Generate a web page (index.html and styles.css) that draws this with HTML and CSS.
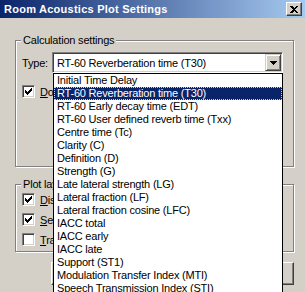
FILE: index.html
```html
<!DOCTYPE html>
<html lang="en">
<head>
    <meta charset="UTF-8">
    <title>Room Acoustics Plot Settings</title>
    <link rel="stylesheet" href="styles.css">
</head>
<body>
    <div class="titlebar">
        <span class="title">Room Acoustics Plot Settings</span>
        <span class="close-btn">
            <svg width="8" height="7" viewBox="0 0 8 7" shape-rendering="crispEdges">
                <path d="M0 0H2L4 2L6 0H8L5 3.5L8 7H6L4 5L2 7H0L3 3.5Z" fill="#000"/>
            </svg>
        </span>
    </div>

    <div class="client">
        <div class="group group-calc">
            <span class="legend">Calculation settings</span>
            <div class="type-row">
                <span class="type-label">Type:</span>
                <div class="combo">
                    <span class="combo-text">RT-60 Reverberation time (T30)</span>
                    <span class="combo-btn">
                        <svg width="7" height="4" viewBox="0 0 7 4" shape-rendering="crispEdges">
                            <path d="M0 0H7V1H6V2H5V3H4V4H3V3H2V2H1V1H0Z" fill="#000"/>
                        </svg>
                    </span>
                    <ul class="dropdown">
                        <li>Initial Time Delay</li>
                        <li class="selected">RT-60 Reverberation time (T30)</li>
                        <li>RT-60 Early decay time (EDT)</li>
                        <li>RT-60 User defined reverb time (Txx)</li>
                        <li>Centre time (Tc)</li>
                        <li>Clarity (C)</li>
                        <li>Definition (D)</li>
                        <li>Strength (G)</li>
                        <li>Late lateral strength (LG)</li>
                        <li>Lateral fraction (LF)</li>
                        <li>Lateral fraction cosine (LFC)</li>
                        <li>IACC total</li>
                        <li>IACC early</li>
                        <li>IACC late</li>
                        <li>Support (ST1)</li>
                        <li>Modulation Transfer Index (MTI)</li>
                        <li>Speech Transmission Index (STI)</li>
                    </ul>
                </div>
            </div>
            <div class="check-row first-check">
                <span class="checkbox checked">
                    <svg width="7" height="7" viewBox="0 0 7 7" shape-rendering="crispEdges"><path d="M0 2H1V3H2V4H3V3H4V2H5V1H6V0H7V3H6V4H5V5H4V6H3V7H2V6H1V5H0Z" fill="#000"/></svg>
                </span>
                <span><u>D</u>o</span>
            </div>
        </div>

        <div class="group group-plot">
            <span class="legend">Plot layout</span>
            <div class="check-list">
                <div class="check-row">
                    <span class="checkbox checked">
                        <svg width="7" height="7" viewBox="0 0 7 7" shape-rendering="crispEdges"><path d="M0 2H1V3H2V4H3V3H4V2H5V1H6V0H7V3H6V4H5V5H4V6H3V7H2V6H1V5H0Z" fill="#000"/></svg>
                    </span>
                    <span><u>D</u>is</span>
                </div>
                <div class="check-row">
                    <span class="checkbox checked">
                        <svg width="7" height="7" viewBox="0 0 7 7" shape-rendering="crispEdges"><path d="M0 2H1V3H2V4H3V3H4V2H5V1H6V0H7V3H6V4H5V5H4V6H3V7H2V6H1V5H0Z" fill="#000"/></svg>
                    </span>
                    <span><u>S</u>e</span>
                </div>
                <div class="check-row">
                    <span class="checkbox"></span>
                    <span><u>T</u>ra</span>
                </div>
            </div>
        </div>

        <div class="buttons">
            <button></button>
            <button></button>
            <button></button>
        </div>
    </div>
</body>
</html>
```

FILE: styles.css
```css
* {
    box-sizing: border-box;
}
html, body {
    margin: 0;
    padding: 0;
}
body {
    width: 305px;
    height: 292px;
    overflow: hidden;
    background-color: #d4d0c8;
    color: #000;
    font-family: "Liberation Sans", Arial, sans-serif;
    font-size: 11px;
    letter-spacing: -0.2px;
}
.titlebar {
    height: 18px;
    display: flex;
    align-items: center;
    justify-content: space-between;
    padding: 0 3px 0 4px;
    background: linear-gradient(to right, #0a246a, #a6caf0);
}
.title {
    color: #fff;
    font-weight: bold;
    letter-spacing: 0.25px;
}
.close-btn {
    width: 16px;
    height: 14px;
    display: flex;
    align-items: center;
    justify-content: center;
    background-color: #d4d0c8;
    border: 1px solid;
    border-color: #fff #404040 #404040 #fff;
    box-shadow: inset -1px -1px 0 #808080;
}
.client {
    padding: 22px 0 0 15px;
}
.group {
    position: relative;
    width: 279px;
    border: 1px solid #808080;
    box-shadow: inset 1px 1px 0 #fff, 1px 1px 0 #fff;
}
.legend {
    position: absolute;
    top: -8px;
    left: 5px;
    padding: 0 2px;
    line-height: 14px;
    background-color: #d4d0c8;
}
.group-calc {
    height: 127px;
    padding: 11px 0 0 6px;
}
.type-row {
    display: flex;
    align-items: center;
    height: 21px;
}
.type-label {
    width: 30px;
}
.combo {
    position: relative;
    width: 231px;
    height: 21px;
    display: flex;
    align-items: center;
    background: #fff;
    border: 1px solid;
    border-color: #808080 #fff #fff #808080;
    box-shadow: inset 1px 1px 0 #404040, inset -1px -1px 0 #d4d0c8;
}
.combo-text {
    flex: 1;
    padding-left: 4px;
    white-space: nowrap;
}
.combo-btn {
    width: 16px;
    height: 17px;
    margin-right: 1px;
    display: flex;
    align-items: center;
    justify-content: center;
    background-color: #d4d0c8;
    border: 1px solid;
    border-color: #d4d0c8 #404040 #404040 #d4d0c8;
    box-shadow: inset 1px 1px 0 #fff, inset -1px -1px 0 #808080;
}
.dropdown {
    position: absolute;
    top: 20px;
    left: 0;
    z-index: 10;
    width: 230px;
    margin: 0;
    padding: 0;
    list-style: none;
    background: #fff;
    border: 1px solid #000;
}
.dropdown li {
    height: 13px;
    line-height: 13px;
    padding-left: 3px;
    white-space: nowrap;
}
.dropdown li.selected {
    background-color: #0a246a;
    color: #fff;
    outline: 1px dotted #e6d27a;
    outline-offset: -1px;
}
.check-row {
    display: flex;
    align-items: center;
    gap: 5px;
    height: 13px;
}
.first-check {
    margin-top: 12px;
}
.checkbox {
    width: 13px;
    height: 13px;
    display: flex;
    align-items: center;
    justify-content: center;
    background: #fff;
    border: 1px solid;
    border-color: #808080 #fff #fff #808080;
    box-shadow: inset 1px 1px 0 #404040, inset -1px -1px 0 #d4d0c8;
}
.group-plot {
    margin-top: 17px;
    height: 68px;
    padding: 8px 0 0 6px;
}
.check-list {
    display: flex;
    flex-direction: column;
    gap: 7px;
}
.buttons {
    width: 279px;
    margin-top: 10px;
    display: flex;
    justify-content: flex-end;
    gap: 9px;
}
button {
    width: 75px;
    height: 23px;
    padding: 0;
    font: inherit;
    color: #000;
    background-color: #d4d0c8;
    border: 1px solid;
    border-color: #fff #404040 #404040 #fff;
    box-shadow: inset -1px -1px 0 #808080;
}
```
